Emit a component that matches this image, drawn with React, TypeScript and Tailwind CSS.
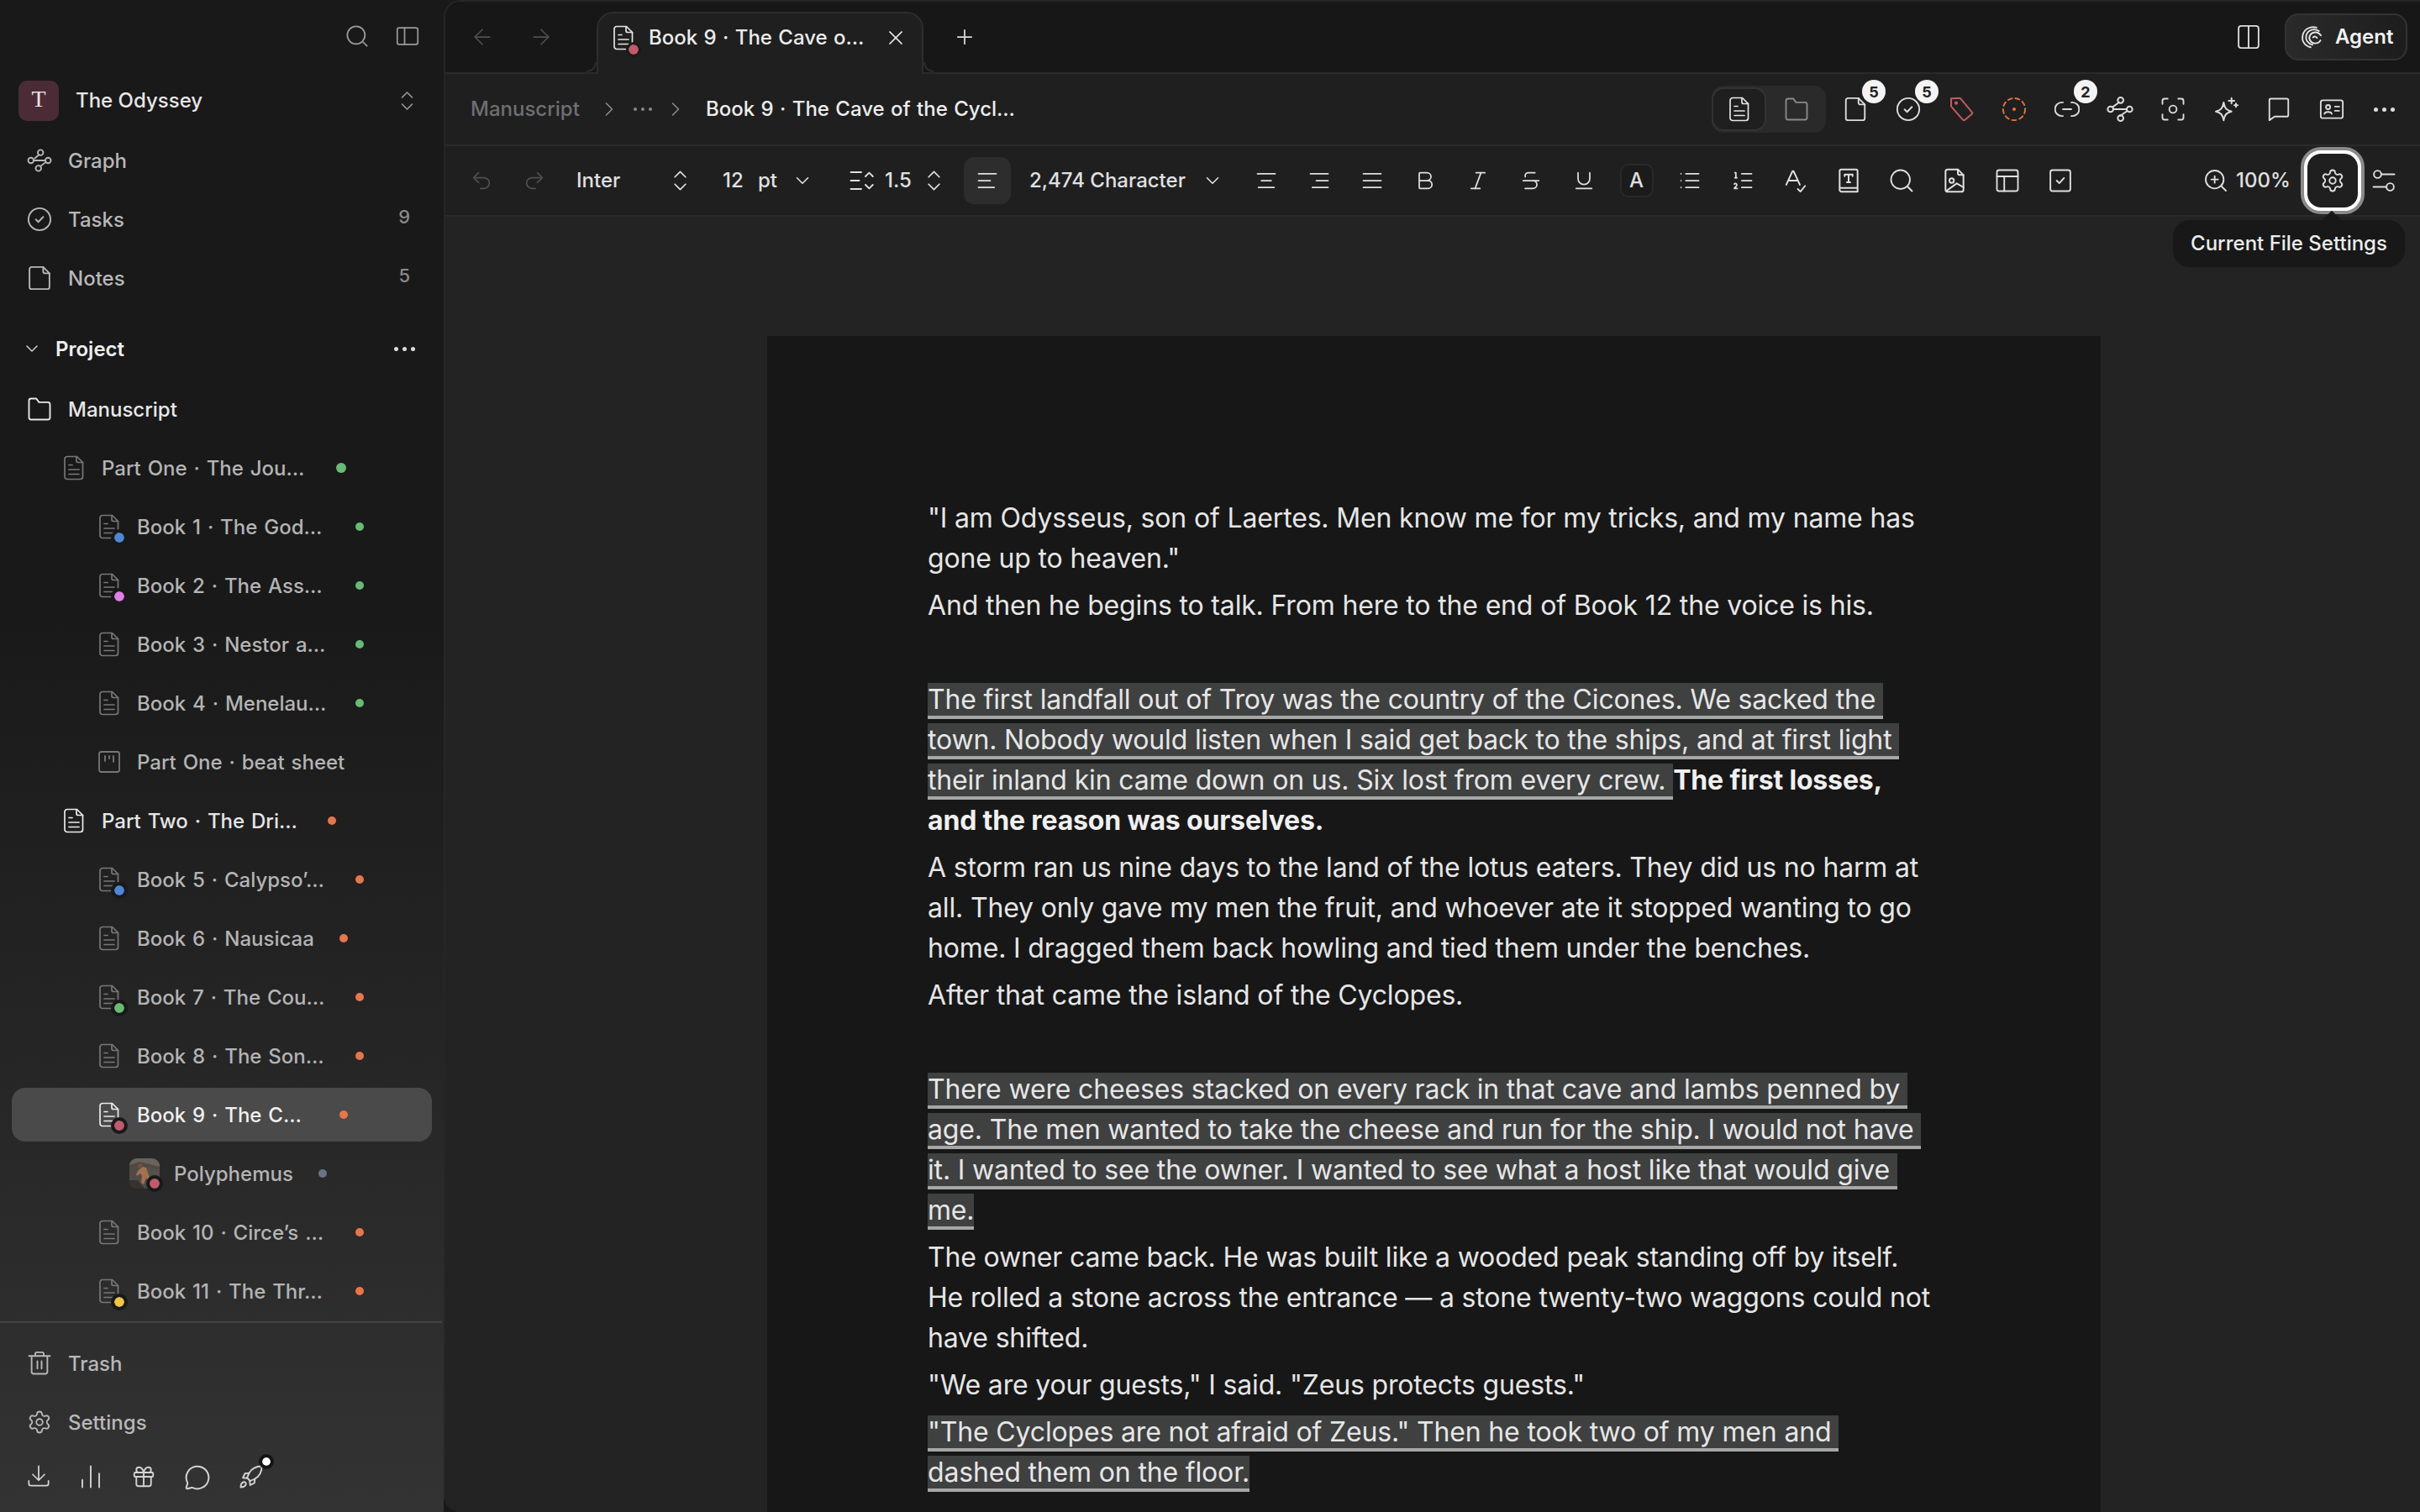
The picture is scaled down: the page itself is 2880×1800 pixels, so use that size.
import { ReactNode } from "react";
import {
  ArrowLeft,
  ArrowRight,
  Bold,
  ChevronDown,
  ChevronRight,
  Gift,
  Italic,
  ListOrdered,
  MessageCircle,
  Plus,
  Redo2,
  Settings,
  Strikethrough,
  Underline,
  Undo2,
  X,
  ZoomIn,
} from "lucide-react";

function Ic({ className, children, sw = 1.5 }: { className?: string; children: ReactNode; sw?: number }) {
  return (
    <svg
      viewBox="0 0 24 24"
      fill="none"
      stroke="currentColor"
      strokeWidth={sw}
      strokeLinecap="round"
      strokeLinejoin="round"
      className={className ?? "h-[30px] w-[30px]"}
    >
      {children}
    </svg>
  );
}

function DocIcon({ className }: { className?: string }) {
  return (
    <svg viewBox="0 0 24 30" fill="none" stroke="currentColor" strokeWidth="1.7" strokeLinejoin="round" strokeLinecap="round" className={className ?? "h-[30px] w-[24px]"}>
      <path d="M4 1.5h11.5l7 7V25.5a3 3 0 0 1-3 3H4a3 3 0 0 1-3-3V4.5a3 3 0 0 1 3-3z" />
      <path d="M15 1.5v5a2 2 0 0 0 2 2h5.5" />
      <path d="M6 11.5h4M6 17h12M6 22.5h12" />
    </svg>
  );
}

function UpDown({ className }: { className?: string }) {
  return (
    <svg viewBox="0 0 16 24" fill="none" stroke="currentColor" strokeWidth="1.6" strokeLinecap="round" strokeLinejoin="round" className={className ?? "h-[26px] w-[17px]"}>
      <path d="M2 8l6-6 6 6M2 16l6 6 6-6" />
    </svg>
  );
}

function GraphIcon({ className }: { className?: string }) {
  return (
    <Ic className={className}>
      <circle cx="13" cy="4.500" r="2.600" />
      <circle cx="3.800" cy="12" r="2.600" />
      <circle cx="20.200" cy="12" r="2.600" />
      <circle cx="11" cy="19.500" r="2.600" />
      <path d="M6.500 12h11M11.500 6.600 7.500 10M13 17.500l5-4" />
    </Ic>
  );
}

function Lines({ kind }: { kind: "left" | "center" | "right" | "justify" }) {
  const d = {
    left: "M3 5h18M3 12h12M3 19h16",
    center: "M3 5h18M7 12h10M4 19h16",
    right: "M3 5h18M9 12h12M5 19h16",
    justify: "M3 5h18M3 12h18M3 19h18",
  }[kind];
  return (
    <Ic className="h-[28px] w-[28px]">
      <path d={d} />
    </Ic>
  );
}

function Dots({ color = "bg-[#ddd]", size = "h-[5px] w-[5px]" }: { color?: string; size?: string }) {
  return (
    <span className="flex gap-[5px]">
      <i className={`${size} rounded-full ${color}`} />
      <i className={`${size} rounded-full ${color}`} />
      <i className={`${size} rounded-full ${color}`} />
    </span>
  );
}

type Row = {
  label: string;
  depth: 1 | 2 | 3;
  width?: string;
  dot?: string;
  badge?: string;
  kind?: "board" | "avatar";
  bright?: boolean;
  selected?: boolean;
};

const green = "h-[10px] w-[10px] bg-[#66bb75]";
const orange = "h-[10px] w-[10px] bg-[#e8764a]";

const rows: Row[] = [
  { label: "Part One · The Jou…", depth: 1, width: "w-[249px]", dot: "h-[12px] w-[12px] bg-[#66bb75]" },
  { label: "Book 1 · The God…", depth: 2, width: "w-[230px]", dot: green, badge: "bg-[#4e86d8]" },
  { label: "Book 2 · The Ass…", depth: 2, width: "w-[230px]", dot: green, badge: "bg-[#e07fea]" },
  { label: "Book 3 · Nestor a…", depth: 2, width: "w-[230px]", dot: green },
  { label: "Book 4 · Menelau…", depth: 2, width: "w-[230px]", dot: green },
  { label: "Part One · beat sheet", depth: 2, kind: "board" },
  { label: "Part Two · The Dri…", depth: 1, width: "w-[239px]", dot: orange, bright: true },
  { label: "Book 5 · Calypso’…", depth: 2, width: "w-[230px]", dot: orange, badge: "bg-[#4e86d8]" },
  { label: "Book 6 · Nausicaa", depth: 2, dot: orange },
  { label: "Book 7 · The Cou…", depth: 2, width: "w-[230px]", dot: orange, badge: "bg-[#66bb75]" },
  { label: "Book 8 · The Son…", depth: 2, width: "w-[230px]", dot: orange },
  { label: "Book 9 · The C…", depth: 2, width: "w-[211px]", dot: orange, badge: "bg-[#c25a6b]", selected: true },
  { label: "Polyphemus", depth: 3, dot: "h-[10px] w-[10px] bg-[#6c7280]", kind: "avatar", badge: "bg-[#c25a6b]" },
  { label: "Book 10 · Circe’s …", depth: 2, width: "w-[230px]", dot: orange },
  { label: "Book 11 · The Thr…", depth: 2, width: "w-[230px]", dot: orange, badge: "bg-[#f2c443]" },
];

function TreeRow({ row }: { row: Row }) {
  const pad = row.depth === 1 ? "pl-[76px]" : row.depth === 2 ? "pl-[118px]" : "pl-[154px]";
  return (
    <div className={`relative flex h-[70px] shrink-0 items-center ${pad}`}>
      {row.selected && <div className="absolute inset-x-[14px] top-[3px] h-[64px] rounded-[16px] bg-[#4a4a4a]" />}
      {row.kind === "avatar" ? (
        <div className="relative mr-[17px] h-[36px] w-[36px] shrink-0">
          <svg viewBox="0 0 36 36" className="h-full w-full rounded-[9px]">
            <rect width="36" height="36" fill="#4f4a46" />
            <path d="M0 0h36v10L24 7 12 4 0 8z" fill="#6a625c" />
            <path d="M20 10l16 4v22H26z" fill="#55504b" />
            <path d="M0 26l10 0 8 10H0z" fill="#36332f" />
            <path d="M11 14l5-4 4 1 3 9 3 8-3 1-3-6-3 8-3-2 1-8-2-3-4 3-1-2z" fill="#a3714f" />
            <circle cx="13" cy="9" r="2.600" fill="#7d4f38" />
          </svg>
          {row.badge && <span className={`absolute left-[24px] top-[24px] h-[12px] w-[12px] rounded-full outline-[4px] outline-[#191919] ${row.badge}`} />}
        </div>
      ) : (
        <div className="relative mr-[21px] flex w-[24px] shrink-0 justify-center">
          {row.kind === "board" ? (
            <svg viewBox="0 0 26 26" fill="none" stroke="currentColor" strokeWidth="1.8" strokeLinecap="round" className="h-[26px] w-[26px] shrink-0 text-[#777]">
              <rect x="1" y="1" width="24" height="24" rx="2.500" />
              <path d="M8 6v6M13 6v3M18 6v7" />
            </svg>
          ) : (
            <DocIcon className={`h-[30px] w-[24px] ${row.selected || row.bright ? "text-[#ececec]" : "text-[#777]"}`} />
          )}
          {row.badge && <span className={`absolute -bottom-[4px] -right-[6px] h-[12px] w-[12px] rounded-full outline-[4px] outline-[#191919] ${row.badge}`} />}
        </div>
      )}
      <span
        className={`relative shrink-0 whitespace-nowrap pt-[2px] text-[24px] font-medium [word-spacing:1.5px] ${row.width ?? ""} ${
          row.selected ? "text-[#f0f0f0]" : row.bright ? "text-[#e6e6e6]" : "text-[#b4b4b4]"
        }`}
      >
        {row.label}
      </span>
      {row.dot && <span className={`relative ml-[30px] shrink-0 rounded-full ${row.dot}`} />}
    </div>
  );
}

function NavRow({ icon, label, count, bright }: { icon: ReactNode; label: string; count?: string; bright?: boolean }) {
  return (
    <div className={`flex h-[70px] items-center pl-[32px] pr-[40px] ${bright ? "text-[#e8e8e8]" : "text-[#b8b8b8]"}`}>
      <span className="flex w-[30px] justify-center">{icon}</span>
      <span className="ml-[19px] flex-1 pt-[2px] text-[24px] font-medium">{label}</span>
      {count && <span className="-mt-[6px] text-[22px] font-medium text-[#8a8a8a]">{count}</span>}
    </div>
  );
}

function Sidebar() {
  return (
    <aside className="flex h-full w-[528px] shrink-0 flex-col bg-gradient-to-b from-[#191919] from-40% to-[#333333]">
      <div className="flex h-[86px] items-center justify-end gap-[32px] pr-[29px] text-[#9a9a9a]">
        <Ic className="h-[28px] w-[28px]">
          <circle cx="11" cy="11" r="9" />
          <path d="M18 18l4 4" />
        </Ic>
        <Ic className="h-[28px] w-[28px]">
          <rect x="1.500" y="3.500" width="21" height="17" rx="2" />
          <path d="M9 3.500v17" />
        </Ic>
      </div>
      <div className="flex h-[68px] items-center pl-[22px] pr-[35px]">
        <div className="flex h-[48px] w-[48px] items-center justify-center rounded-[10px] bg-[#4b2b36] pb-[4px] text-[28px] text-[#efe6e6] [font-family:'Liberation_Serif',serif]">
          T
        </div>
        <span className="ml-[20px] flex-1 text-[24px] font-medium text-[#e6e6e6]">The Odyssey</span>
        <UpDown className="h-[24px] w-[17px] text-[#9a9a9a]" />
      </div>
      <div className="mt-[2px]">
        <NavRow label="Graph" icon={<GraphIcon className="h-[30px] w-[30px]" />} />
        <NavRow
          label="Tasks"
          count="9"
          icon={
            <Ic className="h-[32px] w-[32px]">
              <circle cx="12" cy="12" r="10.500" />
              <path d="M8.500 12.200l2.400 2.400 4.600-4.800" />
            </Ic>
          }
        />
        <NavRow
          label="Notes"
          count="5"
          icon={
            <Ic className="h-[30px] w-[30px]">
              <path d="M4.500 1.500h11l6 6v13a2 2 0 0 1-2 2h-15a2 2 0 0 1-2-2v-17a2 2 0 0 1 2-2z" />
              <path d="M15.500 1.500v4a2 2 0 0 0 2 2h4" />
            </Ic>
          }
        />
      </div>
      <div className="mt-[14px] flex h-[70px] items-center pl-[26px] pr-[34px] text-[#efefef]">
        <ChevronDown className="h-[24px] w-[24px] text-[#cfcfcf]" strokeWidth={1.5} />
        <span className="ml-[16px] flex-1 pt-[2px] text-[24px] font-semibold">Project</span>
        <Dots />
      </div>
      <div className="mt-[2px] flex min-h-0 flex-1 flex-col overflow-hidden">
        <NavRow
          bright
          label="Manuscript"
          icon={
            <Ic className="h-[30px] w-[30px]">
              <path d="M2 4a2 2 0 0 1 2-2h5l2.500 3.500H20a2 2 0 0 1 2 2V20a2 2 0 0 1-2 2H4a2 2 0 0 1-2-2z" />
            </Ic>
          }
        />
        {rows.map((r) => (
          <TreeRow key={r.label} row={r} />
        ))}
      </div>
      <div className="h-[2px] w-[526px] shrink-0 bg-[#434343]" />
      <div className="shrink-0 pt-[13px]">
        <NavRow
          label="Trash"
          icon={
            <Ic className="h-[30px] w-[30px]">
              <path d="M2 5h20M4.500 5v15a2 2 0 0 0 2 2h11a2 2 0 0 0 2-2V5M8 5V3a1.500 1.500 0 0 1 1.500-1.500h5A1.500 1.500 0 0 1 16 3v2M10 10v7M14 10v7" />
            </Ic>
          }
        />
        <NavRow label="Settings" icon={<Settings className="h-[30px] w-[30px]" strokeWidth={1.5} />} />
      </div>
      <div className="flex h-[72px] shrink-0 items-start gap-[33px] pl-[32px] pt-[15px] text-[#d4d4d4]">
        <Ic className="h-[28px] w-[28px]">
          <path d="M12 2v14M6 10.500l6 6 6-6M2 17v3a2 2 0 0 0 2 2h16a2 2 0 0 0 2-2v-3" />
        </Ic>
        <Ic className="h-[30px] w-[30px]">
          <path d="M4 15v7M12 2v20M20 9v13" />
        </Ic>
        <Gift className="h-[30px] w-[30px]" strokeWidth={1.5} />
        <MessageCircle className="h-[32px] w-[32px]" strokeWidth={1.5} />
        <span className="relative">
          <Ic className="h-[30px] w-[30px]">
            <path d="M22 2c-5.500 0-9.500 2-12 6.500L8 13l3 3 4.500-2C20 11.500 22 7.500 22 2z" />
            <path d="M10 8.500l-4 .5-2 4 4 .5M15.500 14l-.5 4-4 2-.5-4" />
            <path d="M5 17c-2 .5-3 2.500-3 5 2.500 0 4.500-1 5-3a1.800 1.800 0 0 0-2-2z" />
          </Ic>
          <i className="absolute -right-[8px] -top-[8px] h-[10px] w-[10px] rounded-full bg-white outline-[4px] outline-[#141414]" />
        </span>
      </div>
    </aside>
  );
}

function TabBar() {
  return (
    <div className="flex h-[84px] shrink-0 items-center bg-[#171717] text-[#eee]">
      <div className="flex w-[180px] items-center pl-[29px] text-[#4f4f4f]">
        <ArrowLeft className="h-[30px] w-[30px]" strokeWidth={1.4} />
        <ArrowRight className="ml-[40px] h-[30px] w-[30px]" strokeWidth={1.4} />
      </div>
      <div className="relative z-10 mt-[12px] flex h-[74px] w-[389px] items-center self-start rounded-t-[20px] border-x-2 border-t-2 border-[#2d2d2d] bg-[#1f1f1f] pb-[14px] pl-[18px]">
        <span className="absolute -left-[14px] bottom-[2px] h-[12px] w-[12px] rounded-br-[12px] border-b-2 border-r-2 border-[#2d2d2d]" />
        <span className="absolute -right-[14px] bottom-[2px] h-[12px] w-[12px] rounded-bl-[12px] border-b-2 border-l-2 border-[#2d2d2d]" />
        <span className="relative">
          <DocIcon className="h-[32px] w-[24px] text-[#e6e6e6]" />
          <i className="absolute -bottom-[4px] -right-[6px] h-[12px] w-[12px] rounded-full bg-[#c25a6b] outline-[3px] outline-[#1a1a1a]" />
        </span>
        <span className="ml-[18px] w-[255px] whitespace-nowrap text-[24px] font-medium text-[#ececec] [word-spacing:1px]">Book 9 · The Cave o…</span>
        <X className="ml-[25px] h-[28px] w-[28px] shrink-0" strokeWidth={1.5} />
      </div>
      <Plus className="ml-[35px] h-[28px] w-[28px] text-[#ddd]" strokeWidth={1.5} />
      <div className="flex-1" />
      <Ic className="h-[30px] w-[30px] text-[#ddd]">
        <rect x="2.500" y="1.500" width="19" height="21" rx="2.500" />
        <path d="M12 1.500v21" />
      </Ic>
      <div className="ml-[28px] mr-[15px] flex h-[56px] w-[146px] items-center rounded-[16px] border-2 border-[#333] bg-gradient-to-r from-[#2a2a2a] to-[#1d1d1d] pl-[16px]">
        <svg viewBox="0 0 24 24" fill="none" stroke="currentColor" strokeWidth="1.600" strokeLinecap="round" className="h-[30px] w-[28px] text-[#e6e6e6]">
          <path d="M17 2.500C11 .5 4.500 4 3 10c-1.500 6 2 11 8 12.500M19.500 6C14.500 2.500 8 5 6.500 10.500 5.500 15 8 19 13 20M21.500 10.500C19 6.500 13 6 10.500 10c-2 3.500 0 8 5 8.500 2.500 0 4.500-1 5.500-3M13.500 12.500c1-1.500 3.500-1 4 .5" />
        </svg>
        <span className="ml-[14px] text-[24px] font-semibold text-[#f2f2f2]">Agent</span>
      </div>
    </div>
  );
}

function Badge({ n }: { n: string }) {
  return (
    <span className="absolute -right-[5px] -top-[20px] flex h-[28px] w-[28px] items-center justify-center rounded-full bg-[#f4f4f4] text-[18px] font-bold text-[#222]">
      {n}
    </span>
  );
}

function Slot({ children }: { children: ReactNode }) {
  return <div className="relative flex w-[63px] shrink-0 justify-center">{children}</div>;
}

function Breadcrumb() {
  return (
    <div className="flex h-[86px] shrink-0 items-center border-t-2 border-[#2a2a2a] bg-[#1f1f1f] text-[#dcdcdc]">
      <span className="ml-[30px] w-[131px] text-[24px] font-medium text-[#6f6f72]">Manuscript</span>
      <ChevronRight className="ml-[20px] h-[28px] w-[28px] text-[#8a8a8a]" strokeWidth={1.4} />
      <span className="ml-[15px]">
        <Dots color="bg-[#888]" size="h-[4px] w-[4px]" />
      </span>
      <ChevronRight className="ml-[14px] h-[28px] w-[28px] text-[#8a8a8a]" strokeWidth={1.4} />
      <span className="ml-[22px] text-[24px] font-medium text-[#ededed] [word-spacing:1px]">Book 9 · The Cave of the Cycl…</span>
      <div className="flex-1" />
      <div className="flex h-[56px] w-[136px] items-center rounded-[14px] bg-[#2a2a2a]">
        <div className="flex h-[52px] w-[65px] items-center justify-center rounded-[14px] border-2 border-[#333] bg-[#1f1f1f]">
          <DocIcon className="h-[30px] w-[24px] text-[#e6e6e6]" />
        </div>
        <div className="flex w-[71px] justify-center text-[#8a8a8a]">
          <Ic className="h-[30px] w-[30px]">
            <path d="M2 4a2 2 0 0 1 2-2h5l2.500 3.500H20a2 2 0 0 1 2 2V20a2 2 0 0 1-2 2H4a2 2 0 0 1-2-2z" />
          </Ic>
        </div>
      </div>
      <div className="ml-[3px] mr-[11px] flex items-center">
        <Slot>
          <Ic className="h-[30px] w-[30px]">
            <path d="M5 1.500h10l6 6v13a2 2 0 0 1-2 2H5a2 2 0 0 1-2-2v-17a2 2 0 0 1 2-2z" />
            <path d="M15 1.500v4a2 2 0 0 0 2 2h4" />
          </Ic>
          <Badge n="5" />
        </Slot>
        <Slot>
          <Ic className="h-[30px] w-[30px]">
            <circle cx="12" cy="12" r="10.500" />
            <path d="M8.500 12.200l2.400 2.400 4.600-4.800" />
          </Ic>
          <Badge n="5" />
        </Slot>
        <Slot>
          <Ic className="h-[32px] w-[32px] text-[#c25a62]">
            <path d="M3 2.500l8-.5 10.500 12.500a1.500 1.500 0 0 1-.2 2l-6 5a1.500 1.500 0 0 1-2-.2L3 9.500z" />
            <circle cx="7.500" cy="6.500" r=".8" />
          </Ic>
        </Slot>
        <Slot>
          <Ic className="h-[30px] w-[30px] text-[#e8743b]">
            <circle cx="12" cy="12" r="10.500" strokeDasharray="4 3.200" />
            <circle cx="12" cy="12" r=".9" />
          </Ic>
        </Slot>
        <Slot>
          <Ic className="h-[30px] w-[30px]">
            <path d="M8 5.500H7a6.500 6.500 0 0 0 0 13h1M16 5.500h1a6.500 6.500 0 0 1 0 13h-1M8 12h8" />
          </Ic>
          <Badge n="2" />
        </Slot>
        <Slot>
          <Ic className="h-[32px] w-[32px]">
            <circle cx="12.500" cy="4" r="2.500" />
            <circle cx="3.500" cy="12" r="2.500" />
            <circle cx="20.500" cy="12" r="2.500" />
            <circle cx="12.500" cy="20" r="2.500" />
            <path d="M6 12h12M11 6l-5.500 4M12 18l6.500-4.500" />
          </Ic>
        </Slot>
        <Slot>
          <Ic className="h-[30px] w-[30px]">
            <path d="M2 7V4a2 2 0 0 1 2-2h3M17 2h3a2 2 0 0 1 2 2v3M22 17v3a2 2 0 0 1-2 2h-3M7 22H4a2 2 0 0 1-2-2v-3" />
            <circle cx="12" cy="12" r="3.500" />
          </Ic>
        </Slot>
        <Slot>
          <Ic className="h-[32px] w-[32px]">
            <path d="M10 6c.8 5 2.500 7 7 8-4.500 1-6.200 3-7 8-.8-5-2.500-7-7-8 4.500-1 6.200-3 7-8z" />
            <path d="M17 2v5M14.500 4.500h5M21 7v3M19.500 8.500h3" />
          </Ic>
        </Slot>
        <Slot>
          <Ic className="h-[30px] w-[30px]">
            <path d="M3 3.500a1.500 1.500 0 0 1 1.500-1.500h15A1.500 1.500 0 0 1 21 3.500v14a1.500 1.500 0 0 1-1.500 1.500H8l-5 3.500z" />
          </Ic>
        </Slot>
        <Slot>
          <Ic className="h-[30px] w-[30px]">
            <rect x="1.500" y="3.500" width="21" height="17" rx="2" />
            <circle cx="8.500" cy="10" r="2" />
            <path d="M5 16.500c.5-2.500 6.500-2.500 7 0M15 9.500h4M15 13.500h4" />
          </Ic>
        </Slot>
        <Slot>
          <Dots />
        </Slot>
      </div>
    </div>
  );
}

function Toolbar() {
  return (
    <div className="relative flex h-[86px] shrink-0 items-center border-y-2 border-[#2a2a2a] bg-[#1f1f1f] pl-[11px] text-[24px] font-medium text-[#e0e0e0]">
      <Slot>
        <Undo2 className="h-[28px] w-[28px] text-[#4f4f4f]" strokeWidth={1.5} />
      </Slot>
      <Slot>
        <Redo2 className="h-[28px] w-[28px] text-[#4f4f4f]" strokeWidth={1.5} />
      </Slot>
      <div className="ml-[19px] flex w-[136px] items-center justify-between pr-[4px]">
        <span>Inter</span>
        <UpDown className="h-[26px] w-[17px]" />
      </div>
      <span className="ml-[38px] w-[42px]">12</span>
      <span className="w-[40px]">pt</span>
      <ChevronDown className="h-[26px] w-[26px]" strokeWidth={1.5} />
      <span className="ml-[42px]">
        <Ic className="h-[30px] w-[30px]">
          <path d="M2 4h10M2 12h8M2 20h10M16 8l3.500-3.500L23 8M16 16l3.500 3.500L23 16" />
        </Ic>
      </span>
      <span className="ml-[13px] w-[50px]">1.5</span>
      <UpDown className="h-[26px] w-[17px]" />
      <div className="ml-[27px] flex h-[56px] w-[56px] items-center justify-center rounded-[12px] bg-[#2d2d2d]">
        <Lines kind="left" />
      </div>
      <span className="ml-[22px] w-[205px]">2,474 Character</span>
      <ChevronDown className="h-[26px] w-[26px]" strokeWidth={1.5} />
      <div className="ml-[19px] flex items-center">
        <Slot>
          <Lines kind="center" />
        </Slot>
        <Slot>
          <Lines kind="right" />
        </Slot>
        <Slot>
          <Lines kind="justify" />
        </Slot>
        <Slot>
          <Bold className="h-[28px] w-[28px]" strokeWidth={1.5} />
        </Slot>
        <Slot>
          <Italic className="h-[28px] w-[28px]" strokeWidth={1.5} />
        </Slot>
        <Slot>
          <Strikethrough className="h-[28px] w-[28px]" strokeWidth={1.5} />
        </Slot>
        <Slot>
          <Underline className="h-[28px] w-[28px]" strokeWidth={1.5} />
        </Slot>
        <Slot>
          <span className="flex h-[40px] w-[40px] items-center justify-center rounded-[10px] border-2 border-[#292929] bg-[#1b1b1b] text-[24px] font-medium">A</span>
        </Slot>
        <Slot>
          <Ic className="h-[28px] w-[28px]">
            <path d="M8 5h13M8 12h13M8 19h13M3 5h.01M3 12h.01M3 19h.01" />
          </Ic>
        </Slot>
        <Slot>
          <ListOrdered className="h-[28px] w-[28px]" strokeWidth={1.5} />
        </Slot>
        <Slot>
          <Ic className="h-[30px] w-[30px]">
            <path d="M3 16L9 3h1l6 13M5 12h9M14 20l2.500 2.500L21 17" />
          </Ic>
        </Slot>
        <Slot>
          <Ic className="h-[32px] w-[32px]">
            <path d="M4 19.500V3.500A1.500 1.500 0 0 1 5.500 2h13A1.500 1.500 0 0 1 20 3.500V22H6a2 2 0 0 1-2-2.500zM4 18.500h16M8.500 8V6.500h7V8M12 6.500v7M10.500 13.500h3" />
          </Ic>
        </Slot>
        <Slot>
          <Ic className="h-[30px] w-[30px]">
            <circle cx="11" cy="11" r="9" />
            <path d="M18 18l4 4" />
          </Ic>
        </Slot>
        <Slot>
          <Ic className="h-[32px] w-[32px]">
            <path d="M6 2h9l5 5v13a2 2 0 0 1-2 2H6a2 2 0 0 1-2-2V4a2 2 0 0 1 2-2z" />
            <path d="M15 2v3.500a1.500 1.500 0 0 0 1.500 1.500H20" />
            <circle cx="9.500" cy="12" r="2" />
            <path d="M5 21l9-6.500 6 3.500" />
          </Ic>
        </Slot>
        <Slot>
          <Ic className="h-[30px] w-[30px]">
            <rect x="2" y="2" width="20" height="20" rx="2" />
            <path d="M2 8h20M9 8v14" />
          </Ic>
        </Slot>
        <Slot>
          <Ic className="h-[30px] w-[30px]">
            <rect x="2.500" y="2" width="19" height="20" rx="2" />
            <path d="M8.500 12l2.500 2.500 4.500-5" />
          </Ic>
        </Slot>
      </div>
      <div className="flex-1" />
      <ZoomIn className="h-[32px] w-[32px]" strokeWidth={1.4} />
      <span className="ml-[8px] w-[64px] whitespace-nowrap">100%</span>
      <div className="relative ml-[21px] flex h-[64px] w-[60px] items-center justify-center rounded-[16px] outline-[4px] outline-white ring-[8px] ring-[#8a8a8a]">
        <Settings className="h-[30px] w-[30px]" strokeWidth={1.5} />
      </div>
      <div className="ml-[16px] mr-[28px]">
        <Ic className="h-[30px] w-[30px]">
          <circle cx="6" cy="6" r="3.500" />
          <path d="M9.500 6H22M2 18h12.500" />
          <circle cx="18" cy="18" r="3.500" />
        </Ic>
      </div>
      <div className="absolute right-[18px] top-[88px] z-20 flex h-[56px] w-[276px] items-center justify-center rounded-[20px] bg-[#181818] text-[24px] font-medium text-[#ececec]">
        <span className="absolute -top-[8px] left-[181px] h-[16px] w-[16px] rotate-45 bg-[#181818]" />
        <span className="relative">Current File Settings</span>
      </div>
    </div>
  );
}

const hl = "border-b-4 border-[#a6a6a6] bg-[#3f4040] box-decoration-clone";

function Editor() {
  return (
    <div className="min-h-0 flex-1 overflow-hidden bg-[#232323] pl-[383px] pt-[142px]">
      <div className="h-[1500px] w-[1587px] whitespace-pre-wrap bg-[#171717] pl-[191px] pr-[191px] pt-[193px] text-[32px] leading-[48px] tracking-[-0.16px] text-[#e6e6e6]">
        <p className="mb-[8px]">"I am Odysseus, son of Laertes. Men know me for my tricks, and my name has gone up to heaven."</p>
        <p className="mb-[8px]">And then he begins to talk. From here to the end of Book 12 the voice is his.</p>
        <p className="mb-[8px] h-[48px]" />
        <p className="mb-[8px]">
          <span className={hl}>
            The first landfall out of Troy was the country of the Cicones. We sacked the town. Nobody would listen when I said get back to the ships, and at first light their inland kin came down on us. Six lost from every crew.{" "}
          </span>
          <strong className="font-bold text-[#f0f0f0]">
            The first losses,
            <br />
            and the reason was ourselves.
          </strong>
        </p>
        <p className="mb-[8px]">A storm ran us nine days to the land of the lotus eaters. They did us no harm at all. They only gave my men the fruit, and whoever ate it stopped wanting to go home. I dragged them back howling and tied them under the benches.</p>
        <p className="mb-[8px]">After that came the island of the Cyclopes.</p>
        <p className="mb-[8px] h-[48px]" />
        <p className="mb-[8px]">
          <span className={hl}>
            There were cheeses stacked on every rack in that cave and lambs penned by age. The men wanted to take the cheese and run for the ship. I would not have it. I wanted to see the owner. I wanted to see what a host like that would give me.
          </span>
        </p>
        <p className="mb-[8px]">The owner came back. He was built like a wooded peak standing off by itself. He rolled a stone across the entrance — a stone twenty-two waggons could not have shifted.</p>
        <p className="mb-[8px]">"We are your guests," I said. "Zeus protects guests."</p>
        <p className="mb-[8px]">
          <span className={hl}>
            "The Cyclopes are not afraid of Zeus." Then he took two of my men and{" "}
            <br />
            dashed them on the floor.
          </span>
        </p>
      </div>
    </div>
  );
}

export default function App() {
  return (
    <div className="flex h-screen w-screen overflow-hidden bg-[#191919] [font-family:Inter,sans-serif]">
      <Sidebar />
      <main className="flex min-w-0 flex-1 flex-col overflow-hidden rounded-l-[20px] border-l-2 border-t-2 border-[#262626]">
        <TabBar />
        <Breadcrumb />
        <Toolbar />
        <Editor />
      </main>
    </div>
  );
}
